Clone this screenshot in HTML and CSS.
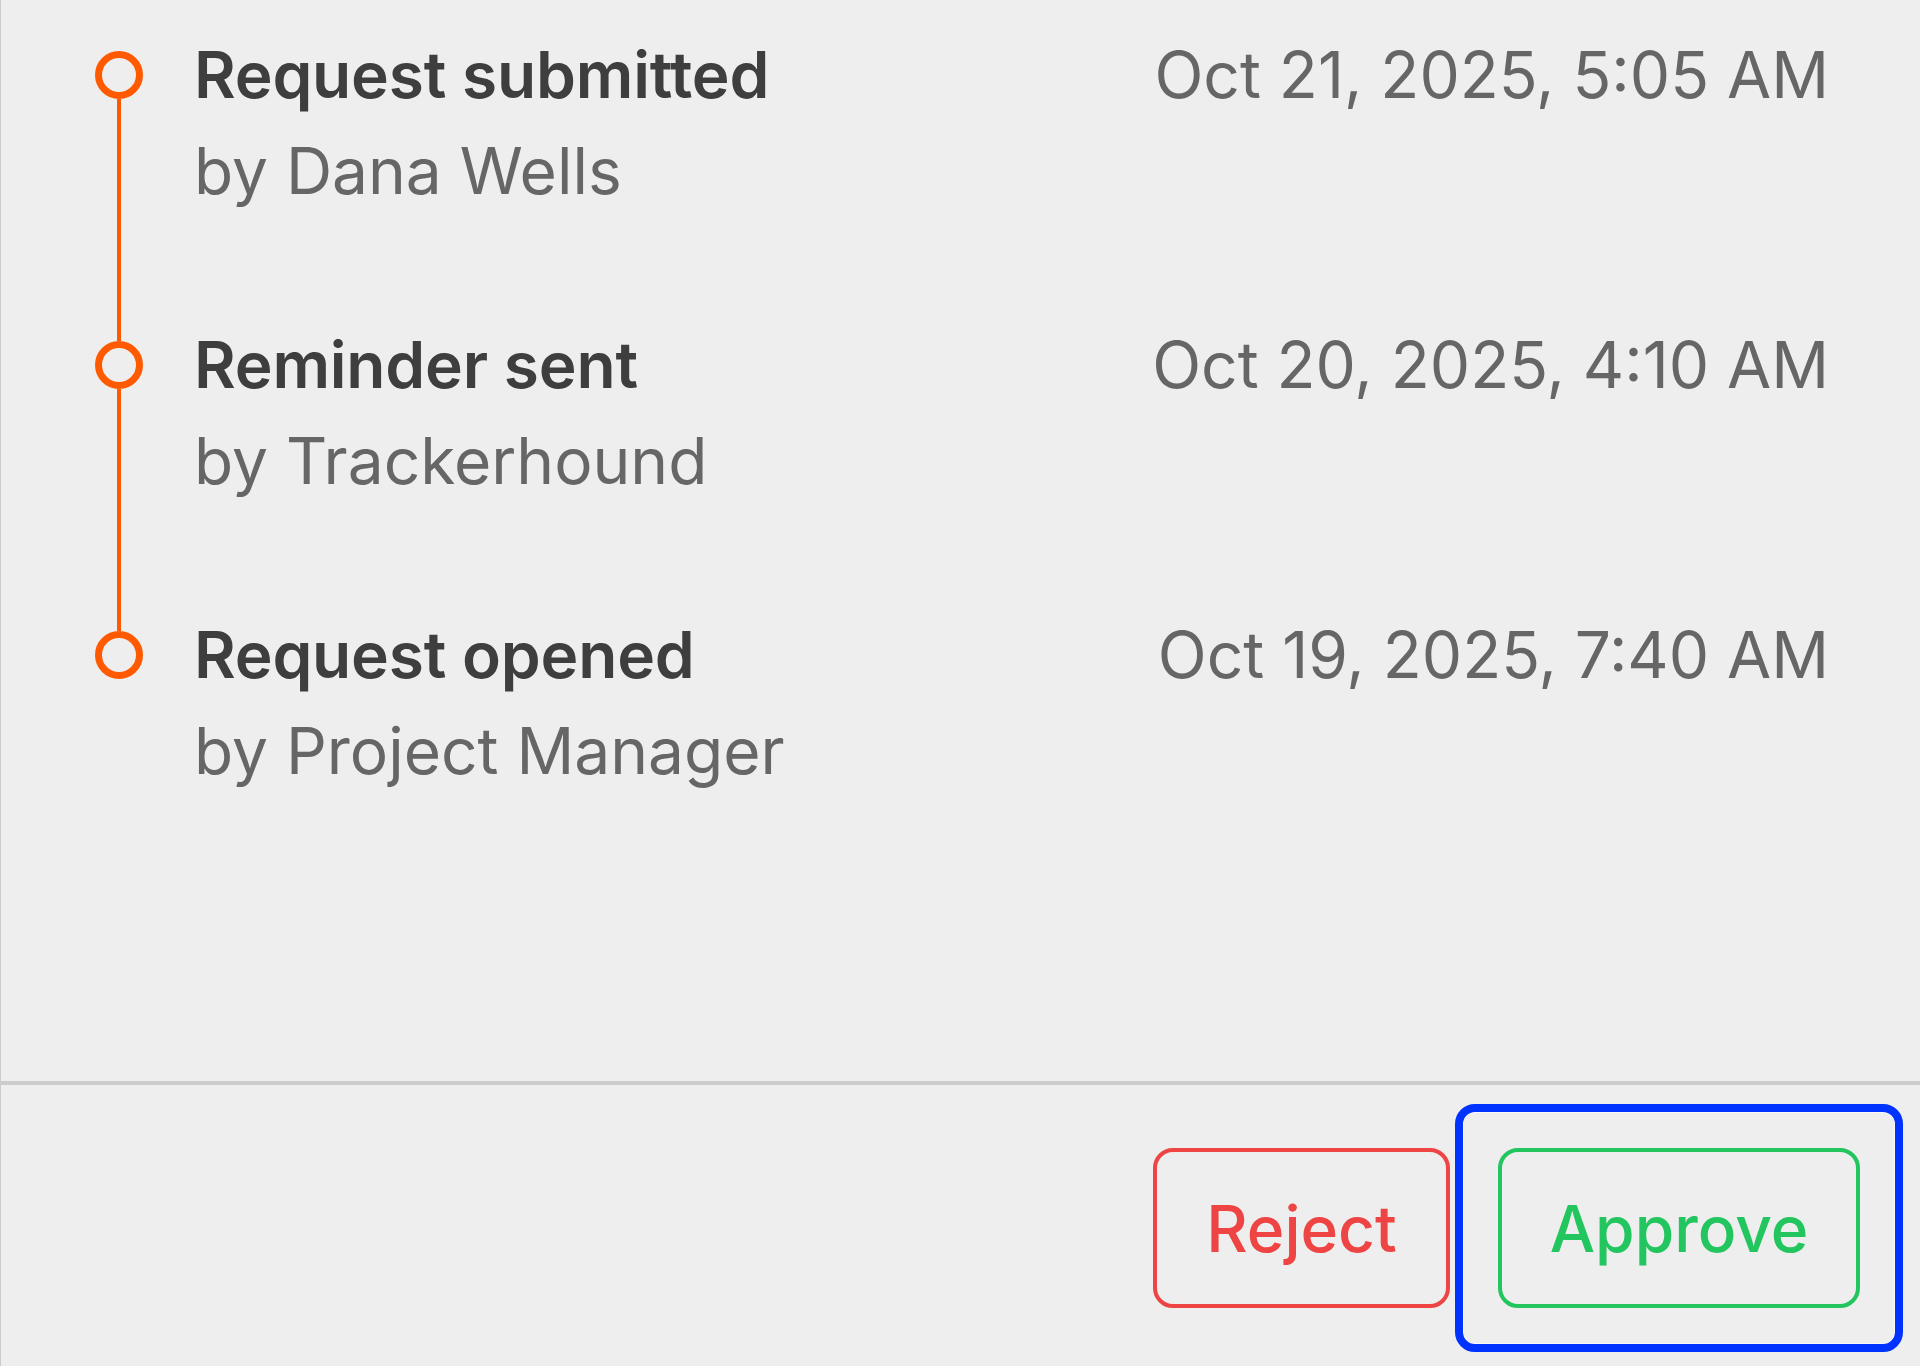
FILE: index.html
```html
<!DOCTYPE html>
<html lang="en">
<head>
<meta charset="utf-8">
<title>Request history</title>
<link rel="stylesheet" href="styles.css">
</head>
<body>
<div class="panel">
  <ol class="timeline">
    <li class="event first">
      <div class="marker"><span class="stub"></span><span class="dot"></span><span class="line"></span></div>
      <div class="body">
        <div class="title">Request submitted</div>
        <div class="by">by Dana Wells</div>
      </div>
      <div class="time">Oct 21, 2025, 5:05 AM</div>
    </li>
    <li class="event">
      <div class="marker"><span class="stub"></span><span class="dot"></span><span class="line"></span></div>
      <div class="body">
        <div class="title">Reminder sent</div>
        <div class="by">by Trackerhound</div>
      </div>
      <div class="time">Oct 20, 2025, 4:10 AM</div>
    </li>
    <li class="event last">
      <div class="marker"><span class="stub"></span><span class="dot"></span><span class="line"></span></div>
      <div class="body">
        <div class="title">Request opened</div>
        <div class="by">by Project Manager</div>
      </div>
      <div class="time">Oct 19, 2025, 7:40 AM</div>
    </li>
  </ol>
  <div class="footer">
    <button class="btn btn-reject" type="button">Reject</button>
    <div class="focus-ring">
      <button class="btn btn-approve" type="button">Approve</button>
    </div>
  </div>
</div>
</body>
</html>
```

FILE: styles.css
```css
html, body {
  margin: 0;
  padding: 0;
  height: 100%;
}

body {
  background: #eeeeee;
  font-family: Inter, "Noto Sans", "Liberation Sans", sans-serif;
  font-size: 64px;
  overflow: hidden;
}

.panel {
  height: 100vh;
  display: flex;
  flex-direction: column;
  border-left: 1px solid #cccccc;
  box-sizing: border-box;
}

.timeline {
  list-style: none;
  margin: 0;
  padding: 27px 91px 0 94px;
  flex: 1;
}

.event {
  display: flex;
  align-items: stretch;
}

.marker {
  width: 48px;
  flex: none;
  display: flex;
  flex-direction: column;
  align-items: center;
  margin-right: 51px;
}

.stub {
  width: 4px;
  height: 24px;
  background: #ff5a00;
  flex: none;
}

.first .stub {
  background: transparent;
}

.dot {
  width: 48px;
  height: 48px;
  box-sizing: border-box;
  border: 7px solid #ff5a00;
  border-radius: 50%;
  flex: none;
}

.line {
  width: 4px;
  flex: 1;
  background: #ff5a00;
}

.last .line {
  background: transparent;
}

.body {
  flex: 1;
  padding-bottom: 98px;
}

.title {
  line-height: 96px;
  font-weight: 600;
  color: #3e3e3e;
  letter-spacing: -0.2px;
}

.by {
  line-height: 96px;
  font-weight: 400;
  color: #666666;
}

.time {
  line-height: 96px;
  color: #666666;
  white-space: nowrap;
}

.footer {
  border-top: 4px solid #cccccc;
  margin-left: -1px;
  display: flex;
  justify-content: flex-end;
  align-items: center;
  gap: 5px;
  padding: 19px 17px 14px 0;
}

.btn {
  font-family: inherit;
  font-size: 64px;
  font-weight: 500;
  background: transparent;
  height: 160px;
  border-radius: 20px;
  border: 4px solid;
  cursor: pointer;
  box-sizing: border-box;
}

.btn-reject {
  width: 297px;
  color: #ef4444;
  border-color: #ef4444;
}

.btn-approve {
  width: 362px;
  color: #22c55e;
  border-color: #22c55e;
}

.focus-ring {
  border: 8px solid #0033ff;
  border-radius: 20px;
  padding: 36px 35px;
  box-shadow: inset 0 0 0 1px #f8f8f8;
}
```
